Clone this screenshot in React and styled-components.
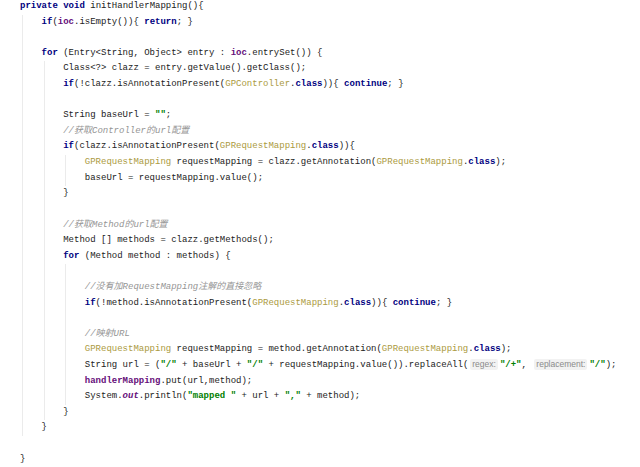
import React from "react";
import styled, { createGlobalStyle } from "styled-components";

const GlobalStyle = createGlobalStyle`
  html, body {
    margin: 0;
    padding: 0;
    background: #fff;
  }
`;

const CHAR = 5.4;

const Editor = styled.div`
  width: 640px;
  height: 467px;
  overflow: hidden;
  padding-left: 20px;
  box-sizing: border-box;
  font-family: "Liberation Mono", "Noto Sans CJK SC", monospace;
  font-size: 9px;
  color: #222;
`;

const Code = styled.div`
  margin-top: -1px;
`;

// indent guides are drawn as thin 1px backgrounds on each line
const guideBg = (n) => {
  if (!n) return "";
  const imgs = [];
  const pos = [];
  for (let i = 0; i < n; i++) {
    imgs.push("linear-gradient(#ebebeb, #ebebeb)");
    pos.push(`${2 + i * CHAR * 4}px 0`);
  }
  return `
    background-image: ${imgs.join(", ")};
    background-position: ${pos.join(", ")};
    background-size: 1px 100%;
    background-repeat: no-repeat;
  `;
};

const Line = styled.div`
  height: 15.62px;
  line-height: 15.62px;
  white-space: pre;
  padding-left: ${(p) => p.$indent * CHAR * 4}px;
  ${(p) => guideBg(p.$guides)}
`;

const Kw = styled.span`
  color: #000080;
  font-weight: bold;
`;

const Ann = styled.span`
  color: #ab9a3e;
`;

const Str = styled.span`
  color: #008000;
  font-weight: bold;
`;

const Field = styled.span`
  color: #660e7a;
  font-weight: bold;
  font-style: ${(p) => (p.$static ? "italic" : "normal")};
`;

const Cmt = styled.span`
  color: #959595;
  font-style: italic;
`;

const Hint = styled.span`
  display: inline-block;
  font-family: "Liberation Sans", Arial, sans-serif;
  font-size: 8.5px;
  line-height: 11px;
  color: #8a8a8a;
  background: #f2f2f2;
  border-radius: 2px;
  padding: 0 2px;
  margin: 0 2px;
`;

const L = ({ i = 0, g, children }) => (
  <Line $indent={i} $guides={g === undefined ? i : g}>
    {children}
  </Line>
);

export default function App() {
  return (
    <>
      <GlobalStyle />
      <Editor>
        <Code>
          <L i={0}>
            <Kw>private</Kw> <Kw>void</Kw> initHandlerMapping(){"{"}
          </L>
          <L i={1}>
            <Kw>if</Kw>(<Field>ioc</Field>.isEmpty()){"{"} <Kw>return</Kw>; {"}"}
          </L>
          <L g={1} />
          <L i={1}>
            <Kw>for</Kw> (Entry&lt;String, Object&gt; entry : <Field>ioc</Field>.entrySet()) {"{"}
          </L>
          <L i={2}>Class&lt;?&gt; clazz = entry.getValue().getClass();</L>
          <L i={2}>
            <Kw>if</Kw>(!clazz.isAnnotationPresent(<Ann>GPController</Ann>.<Kw>class</Kw>)){"{"}{" "}
            <Kw>continue</Kw>; {"}"}
          </L>
          <L g={2} />
          <L i={2}>
            String baseUrl = <Str>""</Str>;
          </L>
          <L i={2}>
            <Cmt>//获取Controller的url配置</Cmt>
          </L>
          <L i={2}>
            <Kw>if</Kw>(clazz.isAnnotationPresent(<Ann>GPRequestMapping</Ann>.<Kw>class</Kw>)){"{"}
          </L>
          <L i={3}>
            <Ann>GPRequestMapping</Ann> requestMapping = clazz.getAnnotation(
            <Ann>GPRequestMapping</Ann>.<Kw>class</Kw>);
          </L>
          <L i={3}>baseUrl = requestMapping.value();</L>
          <L i={2}>{"}"}</L>
          <L g={2} />
          <L i={2}>
            <Cmt>//获取Method的url配置</Cmt>
          </L>
          <L i={2}>Method [] methods = clazz.getMethods();</L>
          <L i={2}>
            <Kw>for</Kw> (Method method : methods) {"{"}
          </L>
          <L g={3} />
          <L i={3}>
            <Cmt>//没有加RequestMapping注解的直接忽略</Cmt>
          </L>
          <L i={3}>
            <Kw>if</Kw>(!method.isAnnotationPresent(<Ann>GPRequestMapping</Ann>.<Kw>class</Kw>)){"{"}{" "}
            <Kw>continue</Kw>; {"}"}
          </L>
          <L g={3} />
          <L i={3}>
            <Cmt>//映射URL</Cmt>
          </L>
          <L i={3}>
            <Ann>GPRequestMapping</Ann> requestMapping = method.getAnnotation(
            <Ann>GPRequestMapping</Ann>.<Kw>class</Kw>);
          </L>
          <L i={3}>
            String url = (<Str>"/"</Str> + baseUrl + <Str>"/"</Str> + requestMapping.value()).replaceAll(
            <Hint>regex:</Hint>
            <Str>"/+"</Str>, <Hint>replacement:</Hint>
            <Str>"/"</Str>);
          </L>
          <L i={3}>
            <Field>handlerMapping</Field>.put(url,method);
          </L>
          <L i={3}>
            System.<Field $static>out</Field>.println(<Str>"mapped "</Str> + url + <Str>","</Str> + method);
          </L>
          <L i={2}>{"}"}</L>
          <L i={1}>{"}"}</L>
          <L g={0} />
          <L i={0}>{"}"}</L>
        </Code>
      </Editor>
    </>
  );
}
